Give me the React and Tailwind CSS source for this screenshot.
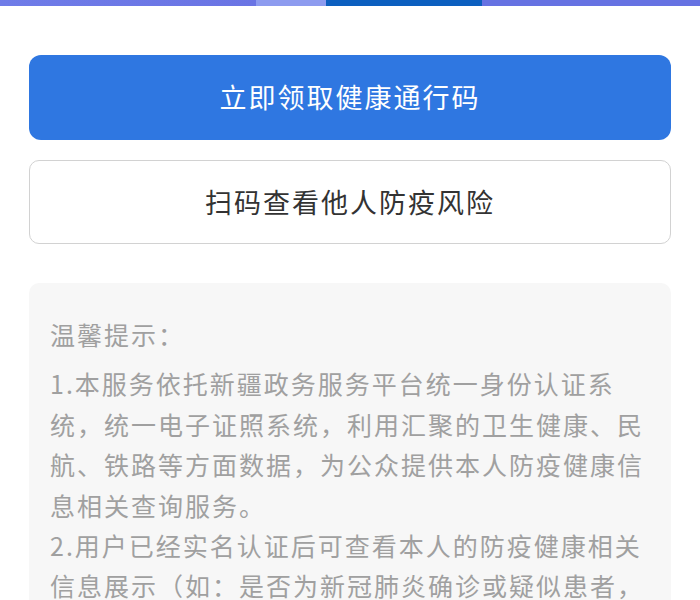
import React from "react";

const FONT = { fontFamily: '"Noto Sans CJK SC", "Noto Sans", sans-serif' };

const tips = [
  "1.本服务依托新疆政务服务平台统一身份认证系",
  "统，统一电子证照系统，利用汇聚的卫生健康、民",
  "航、铁路等方面数据，为公众提供本人防疫健康信",
  "息相关查询服务。",
  "2.用户已经实名认证后可查看本人的防疫健康相关",
  "信息展示（如：是否为新冠肺炎确诊或疑似患者，",
];

export default function App() {
  return (
    <div className="w-[700px] h-[600px] overflow-hidden bg-white" style={FONT}>
      {/* top banner edge */}
      <div className="flex h-[6px]">
        <div className="w-[256px] bg-gradient-to-r from-[#6f7ce8] to-[#6a74e4]" />
        <div className="w-[70px] bg-[#8d9bef]" />
        <div className="w-[156px] bg-[#0c5fbf]" />
        <div className="flex-1 bg-[#6672e2]" />
      </div>

      <div className="px-[29px] pt-[49px]">
        <button className="w-full h-[85px] rounded-[12px] bg-[#2f77e1] text-white text-[27px] tracking-[2px] flex items-center justify-center">
          立即领取健康通行码
        </button>

        <button className="mt-[20px] w-full h-[84px] rounded-[10px] border border-[#d2d2d2] bg-white text-[#333333] text-[27px] tracking-[2px] flex items-center justify-center">
          扫码查看他人防疫风险
        </button>

        <div className="mt-[39px] rounded-[10px] bg-[#f7f7f7] pl-[21px] pr-[19px] pt-[31px] pb-[24px] text-[#a0a0a0] text-[25px] tracking-[2px] leading-[40.4px]">
          <div className="mb-[9px]">温馨提示：</div>
          {tips.map((line, i) => (
            <div key={i} className="whitespace-nowrap">
              {line}
            </div>
          ))}
        </div>
      </div>
    </div>
  );
}
